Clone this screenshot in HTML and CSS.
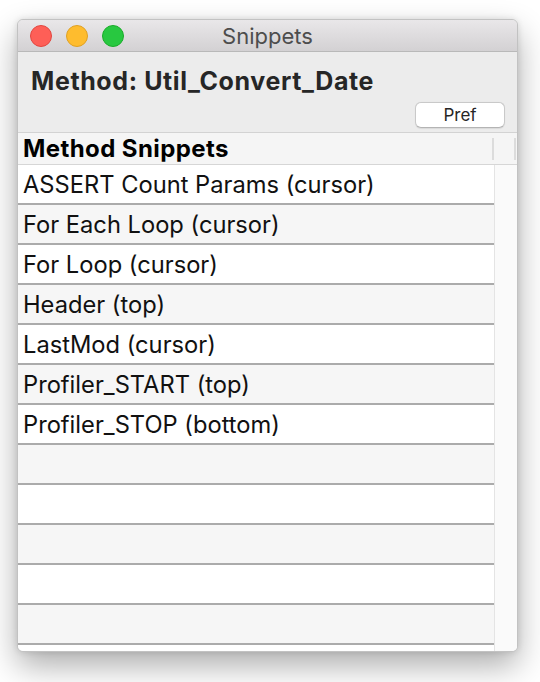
FILE: index.html
```html
<!DOCTYPE html>
<html>
<head>
<meta charset="utf-8">
<link rel="stylesheet" href="styles.css">
</head>
<body>
<div class="window">
  <div class="titlebar">
    <div class="lights">
      <span class="light red"></span>
      <span class="light yellow"></span>
      <span class="light green"></span>
    </div>
    <div class="wtitle">Snippets</div>
  </div>
  <div class="top">
    <div class="method">Method: Util_Convert_Date</div>
    <div class="btnrow"><button class="pref">Pref</button></div>
  </div>
  <div class="table">
    <div class="thead">
      <div class="th">Method Snippets</div>
      <div class="th-sep"></div>
      <div class="th-end"><span class="th-sep"></span></div>
    </div>
    <div class="tbody">
      <div class="rows">
        <div class="row">ASSERT Count Params (cursor)</div>
        <div class="row">For Each Loop (cursor)</div>
        <div class="row">For Loop (cursor)</div>
        <div class="row">Header (top)</div>
        <div class="row">LastMod (cursor)</div>
        <div class="row">Profiler_START (top)</div>
        <div class="row">Profiler_STOP (bottom)</div>
        <div class="row"></div>
        <div class="row"></div>
        <div class="row"></div>
        <div class="row"></div>
        <div class="row"></div>
      </div>
      <div class="track"></div>
    </div>
  </div>
</div>
</body>
</html>
```
FILE: styles.css
```css
html, body {
  margin: 0;
  padding: 0;
  background: #ffffff;
}
html {
  height: 100%;
}
body {
  min-height: 100%;
  box-sizing: border-box;
  padding: 19px 0 0 17px;
  font-family: Inter, "Liberation Sans", sans-serif;
}
.window {
  width: 499px;
  height: 631px;
  border: 1px solid #c2c2c2;
  border-radius: 6px;
  overflow: hidden;
  background: #ececec;
  box-shadow: 0 14px 32px rgba(0,0,0,0.32), 0 0 6px rgba(0,0,0,0.12);
  display: flex;
  flex-direction: column;
}
.titlebar {
  height: 31px;
  flex: none;
  border-bottom: 1px solid #b9b9b9;
  background: linear-gradient(#e9e7e9, #d3d1d3);
  position: relative;
  display: flex;
  align-items: center;
  justify-content: center;
}
.lights {
  position: absolute;
  left: 12px;
  top: 5px;
  display: flex;
  gap: 14px;
}
.light {
  width: 20px;
  height: 20px;
  border-radius: 50%;
  display: block;
}
.red { background: #fe5f57; border: 1px solid #e2463f; }
.yellow { background: #febc2e; border: 1px solid #dfa023; }
.green { background: #28c840; border: 1px solid #1aab29; }
.wtitle {
  font-size: 22px;
  color: #4d4d4d;
  line-height: 31px;
  margin-top: 1px;
}
.top {
  height: 80px;
  flex: none;
  display: flex;
  flex-direction: column;
}
.method {
  font-size: 25px;
  font-weight: 700;
  letter-spacing: 0.6px;
  color: #262626;
  padding: 15px 0 0 13px;
  line-height: 28px;
}
.btnrow {
  display: flex;
  justify-content: flex-end;
  padding: 7px 12px 0 0;
}
.pref {
  width: 90px;
  height: 26px;
  background: #ffffff;
  border: 1px solid #c9c9c9;
  border-bottom-color: #b4b4b4;
  border-radius: 6px;
  font-family: Inter, "Liberation Sans", sans-serif;
  font-size: 17px;
  color: #262626;
  padding: 0;
  line-height: 24px;
  box-shadow: 0 0.5px 1px rgba(0,0,0,0.08);
}
.table {
  flex: 1;
  display: flex;
  flex-direction: column;
  background: #ffffff;
}
.thead {
  height: 31px;
  flex: none;
  border-top: 1px solid #d3d3d3;
  border-bottom: 1px solid #d6d6d6;
  background: #f5f5f5;
  display: flex;
  align-items: center;
}
.th {
  flex: none;
  width: 474px;
  padding-left: 5px;
  box-sizing: border-box;
  font-size: 24px;
  font-weight: 700;
  letter-spacing: 0.4px;
  color: #000000;
  line-height: 31px;
}
.th-sep {
  display: block;
  width: 2px;
  height: 22px;
  background: #dcdcdc;
}
.th-end {
  flex: 1;
  display: flex;
  justify-content: flex-end;
  padding-right: 1px;
}
.tbody {
  flex: 1;
  display: flex;
  overflow: hidden;
}
.rows {
  width: 476px;
  flex: none;
}
.row {
  height: 38px;
  border-bottom: 2px solid #ababab;
  padding-left: 5px;
  font-size: 23.7px;
  line-height: 40px;
  color: #111111;
  background: #ffffff;
  white-space: nowrap;
}
.row:nth-child(even) {
  background: #f6f6f6;
}
.track {
  flex: 1;
  background: #fafafa;
  border-left: 1px solid #e4e4e4;
}
```
